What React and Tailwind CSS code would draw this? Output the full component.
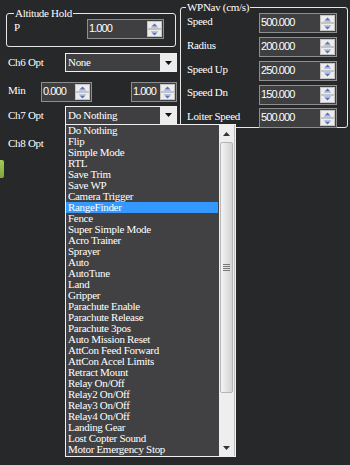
import React from 'react';

const items = [
  'Do Nothing', 'Flip', 'Simple Mode', 'RTL', 'Save Trim', 'Save WP', 'Camera Trigger',
  'RangeFinder', 'Fence', 'Super Simple Mode', 'Acro Trainer', 'Sprayer', 'Auto', 'AutoTune',
  'Land', 'Gripper', 'Parachute Enable', 'Parachute Release', 'Parachute 3pos',
  'Auto Mission Reset', 'AttCon Feed Forward', 'AttCon Accel Limits', 'Retract Mount',
  'Relay On/Off', 'Relay2 On/Off', 'Relay3 On/Off', 'Relay4 On/Off', 'Landing Gear',
  'Lost Copter Sound', 'Motor Emergency Stop',
];

const Spin = ({ up }) => (
  <div className="h-[8px] bg-[#ececec] border border-[#c4c4c4] flex items-center justify-center">
    <svg width="7" height="5" viewBox="0 0 7 5">
      {up ? (
        <>
          <path d="M3.5 0.5 L6.5 3.5 L0.5 3.5 Z" fill="#5b73b8" />
          <rect x="0" y="4" width="7" height="1" fill="#b7c2e0" />
        </>
      ) : (
        <>
          <rect x="0" y="0" width="7" height="1" fill="#b7c2e0" />
          <path d="M0.5 1.5 L6.5 1.5 L3.5 4.5 Z" fill="#5b73b8" />
        </>
      )}
    </svg>
  </div>
);

const NumInput = ({ value, className }) => (
  <div className={`h-[20px] flex border border-[#8e8e8e] bg-[#3f3f41] ${className}`}>
    <span className="flex-1 pl-[1px] leading-[17px] text-[11px] tracking-[-0.9px] text-white font-['Liberation_Sans',sans-serif]">
      {value}
    </span>
    <div className="w-[15px] flex flex-col mt-[1px] mr-[1px]">
      <Spin up />
      <Spin />
    </div>
  </div>
);

const Select = ({ value }) => (
  <div className="w-[112px] h-[19px] flex border border-[#f0f0f0] bg-[#3f3f41]">
    <span className="flex-1 pl-[2px] leading-[17px]">{value}</span>
    <div className="w-[16px] bg-[#ececec] flex items-center justify-center">
      <svg width="7" height="4" viewBox="0 0 7 4">
        <path d="M0 0 L7 0 L3.5 4 Z" fill="#111" />
      </svg>
    </div>
  </div>
);

const wpnav = [
  ['Speed', '500.000'],
  ['Radius', '200.000'],
  ['Speed Up', '250.000'],
  ['Speed Dn', '150.000'],
  ['Loiter Speed', '500.000'],
];

export default function App() {
  return (
    <div className="relative w-[350px] h-[465px] overflow-hidden bg-[#27282a] text-white text-[11px] tracking-[-0.3px] font-['Liberation_Serif',serif] flex">
      {/* Left column */}
      <div className="w-[180px] flex flex-col">
        <fieldset className="mt-[7px] ml-[6px] w-[170px] border border-[#e6e6e6] rounded-[3px]">
          <legend className="ml-[7px] px-[1px] leading-[12px]">Altitude Hold</legend>
          <div className="flex items-center justify-between pl-[7px] pr-[11px] pb-[7px]">
            <span className="pb-[3px]">P</span>
            <NumInput value="1.000" className="w-[77px]" />
          </div>
        </fieldset>

        <div className="flex items-center mt-[6px]">
          <span className="w-[65px] pl-[8px]">Ch6 Opt</span>
          <Select value="None" />
        </div>

        <div className="flex items-center mt-[10px]">
          <span className="w-[41px] pl-[8px] pb-[4px]">Min</span>
          <NumInput value="0.000" className="w-[51px]" />
          <NumInput value="1.000" className="w-[46px] ml-[39px]" />
        </div>

        <div className="flex items-center mt-[3px]">
          <span className="w-[65px] pl-[8px]">Ch7 Opt</span>
          <Select value="Do Nothing" />
        </div>

        <div className="flex items-center h-[19px] mt-[9px]">
          <span className="w-[65px] pl-[8px]">Ch8 Opt</span>
        </div>

        <div className="mt-[7px] w-[4px] h-[18px] rounded-r-[2px] bg-gradient-to-b from-[#a6c85a] to-[#7fa63c]" />
      </div>

      {/* WPNav */}
      <fieldset className="mt-[2px] w-[168px] h-[126px] border border-[#e6e6e6] rounded-[3px]">
        <legend className="ml-[5px] px-[1px] leading-[11px]">WPNav (cm/s)</legend>
        <div className="flex flex-col gap-[3.3px] pl-[6px] pr-[10px]">
          {wpnav.map(([label, value]) => (
            <div key={label} className="flex items-center justify-between">
              <span className="pb-[4px]">{label}</span>
              <NumInput value={value} className="w-[78px]" />
            </div>
          ))}
        </div>
      </fieldset>

      {/* Open dropdown list */}
      <div className="absolute left-[65px] top-[124px] w-[171px] h-[333px] border border-[#f0f0f0] bg-[#414143] flex">
        <div className="flex-1 flex flex-col pr-[1px]">
          {items.map((it) => (
            <div
              key={it}
              className={`h-[11px] leading-[11px] pl-[2px] whitespace-nowrap ${it === 'RangeFinder' ? 'bg-[#3399ff]' : ''}`}
            >
              {it}
            </div>
          ))}
        </div>
        <div className="w-[16px] bg-[#eeeeee] flex flex-col border-r border-[#bdbdbd]">
          <div className="h-[17px] flex items-center justify-center">
            <svg width="7" height="4" viewBox="0 0 7 4">
              <path d="M3.5 0 L7 4 L0 4 Z" fill="#333" />
            </svg>
          </div>
          <div className="h-[251px] mx-[1px] rounded-[2px] border border-[#b5b5b5] bg-gradient-to-r from-[#f4f4f4] to-[#d3d3d3] flex items-center justify-center">
            <div className="flex flex-col gap-[1px]">
              <div className="w-[7px] h-[1px] bg-[#777]" />
              <div className="w-[7px] h-[1px] bg-[#777]" />
              <div className="w-[7px] h-[1px] bg-[#777]" />
              <div className="w-[7px] h-[1px] bg-[#777]" />
            </div>
          </div>
          <div className="flex-1" />
          <div className="h-[17px] flex items-center justify-center">
            <svg width="7" height="4" viewBox="0 0 7 4">
              <path d="M0 0 L7 0 L3.5 4 Z" fill="#333" />
            </svg>
          </div>
        </div>
      </div>
    </div>
  );
}
